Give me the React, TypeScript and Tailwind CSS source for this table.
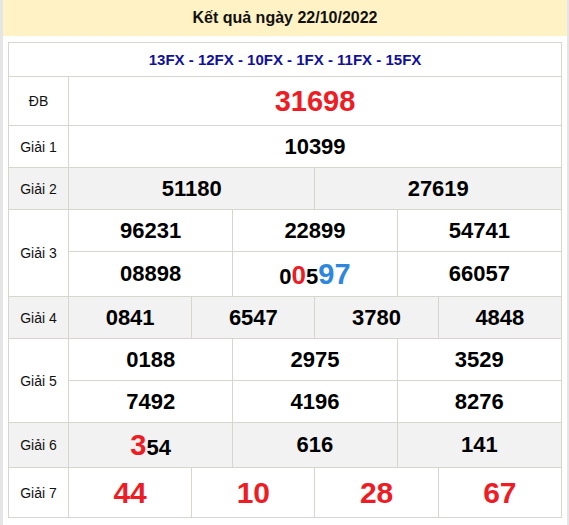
import React from 'react';

const cell = 'border border-[#d8d4ce] text-center align-middle p-0';
const num = 'font-bold text-[22px] text-black';
const label = 'border border-[#d8d4ce] text-center align-middle p-0 text-[14px] text-[#111]';

function Num({ value, className = '' }: { value: string; className?: string }) {
  return <span className={`${num} ${className}`}>{value}</span>;
}

export default function App() {
  return (
    <div
      className="w-[569px] h-[525px] bg-white border-l-[3px] border-r-[2px] border-[#e5e5e5] overflow-hidden"
      style={{ fontFamily: '"Liberation Sans", Arial, sans-serif' }}
    >
      <div className="h-[36px] bg-[#fff2c4] flex items-center justify-center">
        <h2 className="text-[16px] font-bold text-[#111]">Kết quả ngày 22/10/2022</h2>
      </div>

      <div className="px-[5px] pt-[6px]">
        <table className="w-full table-fixed border-collapse border border-[#d8d4ce] leading-none">
          <colgroup>
            <col className="w-[60px]" />
            {Array.from({ length: 12 }).map((_, i) => (
              <col key={i} />
            ))}
          </colgroup>
          <tbody>
            <tr className="h-[34px]">
              <td colSpan={13} className={`${cell} text-[15px] font-bold text-[#10109c]`}>
                13FX - 12FX - 10FX - 1FX - 11FX - 15FX
              </td>
            </tr>
            <tr className="h-[49px]">
              <td className={label}>ĐB</td>
              <td colSpan={12} className={cell}>
                <span className="font-bold text-[29px] text-[#ee1c25]">31698</span>
              </td>
            </tr>
            <tr className="h-[42px]">
              <td className={label}>Giải 1</td>
              <td colSpan={12} className={cell}>
                <Num value="10399" />
              </td>
            </tr>
            <tr className="h-[42px] bg-[#f2f2f2]">
              <td className={label}>Giải 2</td>
              <td colSpan={6} className={cell}>
                <Num value="51180" />
              </td>
              <td colSpan={6} className={cell}>
                <Num value="27619" />
              </td>
            </tr>
            <tr className="h-[42px]">
              <td rowSpan={2} className={label}>
                Giải 3
              </td>
              <td colSpan={4} className={cell}>
                <Num value="96231" />
              </td>
              <td colSpan={4} className={cell}>
                <Num value="22899" />
              </td>
              <td colSpan={4} className={cell}>
                <Num value="54741" />
              </td>
            </tr>
            <tr className="h-[45px]">
              <td colSpan={4} className={cell}>
                <Num value="08898" />
              </td>
              <td colSpan={4} className={cell}>
                <span className="font-bold text-black">
                  <span className="text-[22px]">0</span>
                  <span className="text-[26px] text-[#ee1c25]">0</span>
                  <span className="text-[22px]">5</span>
                  <span className="text-[29px] text-[#2f87dd]">97</span>
                </span>
              </td>
              <td colSpan={4} className={cell}>
                <Num value="66057" />
              </td>
            </tr>
            <tr className="h-[42px] bg-[#f2f2f2]">
              <td className={label}>Giải 4</td>
              {['0841', '6547', '3780', '4848'].map((v) => (
                <td key={v} colSpan={3} className={cell}>
                  <Num value={v} />
                </td>
              ))}
            </tr>
            <tr className="h-[42px]">
              <td rowSpan={2} className={label}>
                Giải 5
              </td>
              {['0188', '2975', '3529'].map((v) => (
                <td key={v} colSpan={4} className={cell}>
                  <Num value={v} />
                </td>
              ))}
            </tr>
            <tr className="h-[42px]">
              {['7492', '4196', '8276'].map((v) => (
                <td key={v} colSpan={4} className={cell}>
                  <Num value={v} />
                </td>
              ))}
            </tr>
            <tr className="h-[45px] bg-[#f2f2f2]">
              <td className={label}>Giải 6</td>
              <td colSpan={4} className={cell}>
                <span className="font-bold text-black">
                  <span className="text-[29px] text-[#ee1c25]">3</span>
                  <span className="text-[22px]">54</span>
                </span>
              </td>
              <td colSpan={4} className={cell}>
                <Num value="616" />
              </td>
              <td colSpan={4} className={cell}>
                <Num value="141" />
              </td>
            </tr>
            <tr className="h-[50px]">
              <td className={label}>Giải 7</td>
              {['44', '10', '28', '67'].map((v) => (
                <td key={v} colSpan={3} className={cell}>
                  <span className="font-bold text-[30px] text-[#ee1c25]">{v}</span>
                </td>
              ))}
            </tr>
          </tbody>
        </table>
      </div>
    </div>
  );
}
